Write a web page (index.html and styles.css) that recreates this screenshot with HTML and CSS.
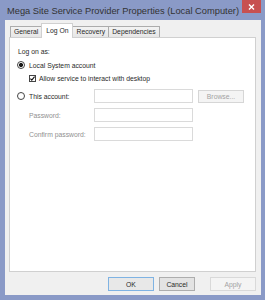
FILE: index.html
```html
<!DOCTYPE html>
<html lang="en">
<head>
  <meta charset="UTF-8">
  <title>Mega Site Service Provider Properties</title>
  <link rel="stylesheet" href="styles.css">
</head>
<body>
  <div class="window">
    <!-- Barra de título -->
    <div class="titlebar">
      <span class="title">Mega Site Service Provider Properties (Local Computer)</span>
      <button class="close" aria-label="Close">
        <svg width="7" height="6" viewBox="0 0 7 6"><path d="M1 0.5 L6 5.5 M6 0.5 L1 5.5" stroke="#fff" stroke-width="1.4" fill="none"/></svg>
      </button>
    </div>
    <div class="client">
      <!-- Pestañas -->
      <div class="tabs">
        <span class="tab">General</span>
        <span class="tab active">Log On</span>
        <span class="tab">Recovery</span>
        <span class="tab">Dependencies</span>
      </div>
      <!-- Contenido de la pestaña -->
      <div class="panel">
        <div class="logon-label">Log on as:</div>
        <label class="option">
          <input type="radio" name="logon" checked>
          <span>Local System account</span>
        </label>
        <label class="option sub">
          <span class="checkbox">
            <svg width="5" height="5" viewBox="0 0 5 5"><path d="M0.4 2.6 L1.8 4.1 L4.6 0.6" stroke="#111" stroke-width="1.1" fill="none"/></svg>
          </span>
          <span>Allow service to interact with desktop</span>
        </label>
        <div class="account">
          <label class="option inline">
            <input type="radio" name="logon">
            <span>This account:</span>
          </label>
          <input class="field" type="text" disabled>
          <button class="browse" disabled>Browse...</button>
          <span class="muted">Password:</span>
          <input class="field" type="password" disabled>
          <span></span>
          <span class="muted">Confirm password:</span>
          <input class="field" type="password" disabled>
        </div>
      </div>
      <!-- Botones inferiores -->
      <div class="actions">
        <button class="btn ok">OK</button>
        <button class="btn cancel">Cancel</button>
        <button class="btn apply" disabled>Apply</button>
      </div>
    </div>
  </div>
</body>
</html>
```

FILE: styles.css
```css
/* Estilos generales */
* {
  box-sizing: border-box;
}
body {
  margin: 0;
  font-family: "Liberation Sans", Arial, sans-serif;
  font-size: 6.8px;
  color: #2a2a2a;
}
/* Ventana */
.window {
  width: 265px;
  height: 300px;
  background: #8a9ac7;
  padding: 0 4px 5px 5px;
  display: flex;
  flex-direction: column;
}
.titlebar {
  height: 20px;
  display: flex;
  align-items: flex-start;
}
.title {
  margin: 5px 0 0 2px;
  font-size: 9.3px;
  line-height: 13px;
  color: #333;
  white-space: nowrap;
}
.close {
  margin-left: auto;
  width: 19px;
  height: 13px;
  border: none;
  padding: 0;
  background: #c75050;
  display: flex;
  align-items: center;
  justify-content: center;
}
.client {
  flex: 1;
  background: #f0f0f0;
  padding: 3px 5px 4px 4px;
  display: flex;
  flex-direction: column;
}
/* Pestañas */
.tabs {
  display: flex;
  align-items: flex-end;
  height: 14px;
  padding-left: 1px;
  position: relative;
  z-index: 1;
}
.tab {
  height: 11px;
  line-height: 10px;
  padding: 0 3px;
  border: 1px solid #acacac;
  border-bottom: none;
  background: linear-gradient(#f3f3f3, #e6e6e6);
  margin-right: -1px;
  white-space: nowrap;
}
.tab.active {
  height: 15px;
  line-height: 14px;
  margin-bottom: -1px;
  padding: 0 4px;
  background: #fff;
  border-color: #d0d0d0;
  position: relative;
}
.panel {
  flex: 1;
  background: #fff;
  border: 1px solid #d0d0d0;
  padding: 9px 7px 0 7px;
}
.logon-label {
  line-height: 10px;
  margin-left: 1px;
}
/* Opciones */
.option {
  display: flex;
  align-items: center;
  gap: 4px;
  height: 10px;
  margin-top: 3px;
  white-space: nowrap;
}
.option.sub {
  margin-left: 12px;
  gap: 3px;
}
.option.inline {
  margin-top: 0;
}
input[type="radio"] {
  appearance: none;
  -webkit-appearance: none;
  width: 8px;
  height: 8px;
  margin: 0;
  border: 1px solid #444;
  border-radius: 50%;
  background: #fff;
}
input[type="radio"]:checked {
  background: radial-gradient(circle, #1a1a1a 0 1.8px, #fff 2.3px);
}
.checkbox {
  width: 7px;
  height: 7px;
  border: 1px solid #444;
  background: #fff;
  display: flex;
  align-items: center;
  justify-content: center;
}
.checkbox svg {
  display: block;
}
/* Cuenta */
.account {
  display: grid;
  grid-template-columns: 72px 99px 46px;
  grid-auto-rows: 14px;
  column-gap: 5px;
  row-gap: 5px;
  align-items: center;
  margin-top: 6px;
}
.muted {
  color: #909090;
  padding-left: 12px;
  white-space: nowrap;
}
.field {
  height: 14px;
  margin: 0;
  border: 1px solid #dadada;
  background: #fff;
}
.browse {
  align-self: start;
  margin-top: 1px;
  height: 13px;
  padding: 0;
  border: 1px solid #d6d6d6;
  background: #f4f4f4;
  color: #a3a3a3;
  font: inherit;
}
/* Botones inferiores */
.actions {
  display: flex;
  justify-content: flex-end;
  margin-top: 5px;
}
.btn {
  height: 14px;
  padding: 0;
  border: 1px solid #adadad;
  background: #e3e3e3;
  color: #2a2a2a;
  font: inherit;
}
.btn.ok {
  width: 46px;
  border-color: #7fb3e3;
  background: #e8e8e8;
}
.btn.cancel {
  width: 36px;
  margin-left: 5px;
}
.btn.apply {
  width: 46px;
  margin-left: 15px;
  border-color: #d9d9d9;
  background: #f4f4f4;
  color: #a3a3a3;
}
```
